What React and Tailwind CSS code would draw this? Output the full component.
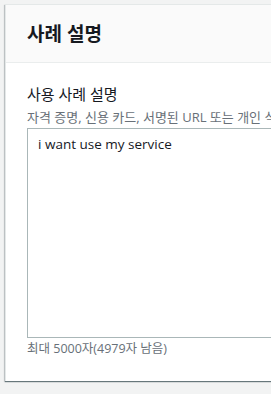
export default function App() {
  return (
    <div
      className="h-[394px] w-full overflow-hidden bg-[#f2f3f3] pl-[5px] pt-[4px]"
      style={{ fontFamily: '"Open Sans", "Noto Sans CJK KR", sans-serif' }}
    >
      <div className="w-[700px] border-l border-t border-[#e4e8e8] bg-white shadow-[0_1px_1px_0_rgba(0,28,36,0.5),-1px_1px_1px_0_rgba(0,28,36,0.15)]">
        <div className="flex h-[58px] items-center border-b border-[#eaeded] bg-[#fafafa] pl-[21px]">
          <h2 className="text-[19px] font-bold leading-[22px] text-[#16191f]">사례 설명</h2>
        </div>
        <div className="pb-[24px] pl-[21px] pt-[20px]">
          <div className="text-[15px] font-normal leading-[22px] text-[#16191f]">사용 사례 설명</div>
          <div className="mt-[4px] whitespace-nowrap text-[13px] leading-[16px] text-[#687078]">
            자격 증명, 신용 카드, 서명된 URL 또는 개인 식별 정보를 공유하지 마십시오.
          </div>
          <div className="mt-[3px] h-[210px] w-[600px] border border-[#aab7b8] px-[10px] py-[4px] text-[13.5px] leading-[22px] text-[#16191f]">
            i want use my service
          </div>
          <div className="mt-[3px] text-[12.5px] leading-[16px] text-[#687078]">최대 5000자(4979자 남음)</div>
        </div>
      </div>
    </div>
  );
}
